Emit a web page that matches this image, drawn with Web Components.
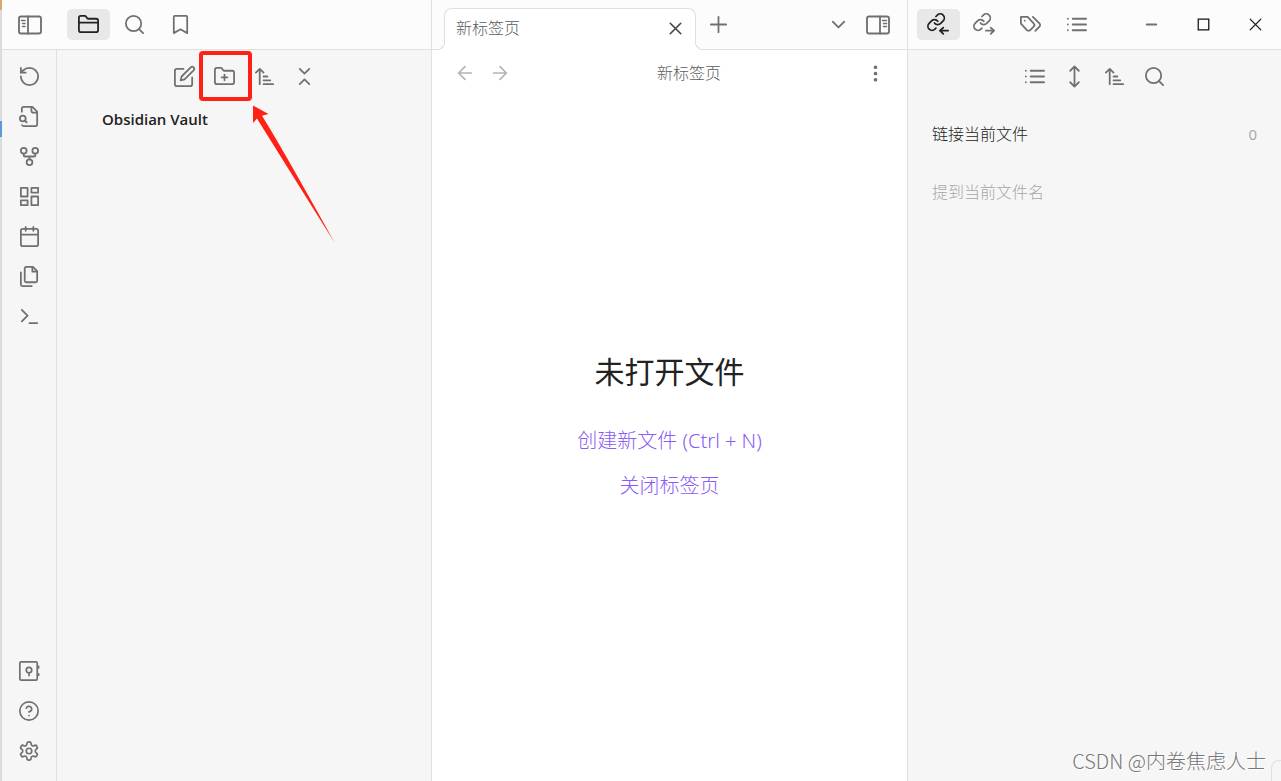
<!DOCTYPE html>
<html lang="zh-CN">
<head>
<meta charset="utf-8">
<meta name="viewport" content="width=device-width, initial-scale=1">
<title>新标签页 - Obsidian Vault</title>
<style>
  html, body { height: 100%; margin: 0; }
  body {
    --bar: #fcfcfc;
    --side: #f6f6f6;
    --line: #e0e0e0;
    --icon: #707070;
    --text: #222;
    --muted: #5c5c5c;
    --faint: #a6a6a6;
    --accent: #8a5cf5;
    --mark: #ff2116;
    font-family: "Open Sans", "Noto Sans CJK SC", sans-serif;
    font-size: 16px;
    line-height: 24px;
    font-weight: 300;
    color: var(--text);
    background: #fff;
    overflow: hidden;
  }
</style>
</head>
<body>
<vault-window></vault-window>

<script>
const ICONS = {
  panelLeft: '<rect x="1" y="3.5" width="22" height="17" rx="2"/><path d="M10 3.5v17"/><path d="M3.5 7.5h3.5M4.5 10.5h2.500M4.500 13.500h2.500" stroke-width="1.500"/>',
  panelRight: '<rect x="1" y="3.5" width="22" height="17" rx="2"/><path d="M14 3.5v17"/><path d="M16.500 7.500h4M17.500 10.500h3M17.500 13.500h3" stroke-width="1.500"/>',
  folder: '<path d="M4 20h16a2 2 0 0 0 2-2V8a2 2 0 0 0-2-2h-7.93a2 2 0 0 1-1.66-.9l-.82-1.200A2 2 0 0 0 7.930 3H4a2 2 0 0 0-2 2v13c0 1.100.9 2 2 2Z"/><path d="M2 10h20"/>',
  folderPlus: '<path d="M4 20h16a2 2 0 0 0 2-2V8a2 2 0 0 0-2-2h-7.93a2 2 0 0 1-1.66-.9l-.82-1.200A2 2 0 0 0 7.930 3H4a2 2 0 0 0-2 2v13c0 1.100.9 2 2 2Z"/><path d="M12 10v6M9 13h6"/>',
  search: '<circle cx="11" cy="11" r="8"/><path d="m21 21-4.300-4.300"/>',
  bookmark: '<path d="m19 21-7-4-7 4V4a1 1 0 0 1 1-1h12a1 1 0 0 1 1 1v17z"/>',
  edit: '<path d="M11 4H4a2 2 0 0 0-2 2v14a2 2 0 0 0 2 2h14a2 2 0 0 0 2-2v-7"/><path d="M18.500 2.500a2.120 2.120 0 0 1 3 3L12 15l-4 1 1-4Z"/>',
  sort: '<path d="m3 8 4-4 4 4M7 4v16M11 12h4M11 16h7M11 20h10"/>',
  collapse: '<path d="m7 20 5-5 5 5M7 4l5 5 5-5"/>',
  rotate: '<path d="M3 12a9 9 0 1 0 9-9 9.750 9.750 0 0 0-6.740 2.740L3 8"/><path d="M3 3v5h5"/>',
  fileSearch: '<path d="M14 2v4a2 2 0 0 0 2 2h4"/><path d="M4.268 21a2 2 0 0 0 1.727 1H18a2 2 0 0 0 2-2V7l-5-5H6a2 2 0 0 0-2 2v3"/><path d="m9 18-1.500-1.500"/><circle cx="5" cy="14" r="3"/>',
  fork: '<circle cx="12" cy="18" r="3"/><circle cx="6" cy="6" r="3"/><circle cx="18" cy="6" r="3"/><path d="M18 9v2c0 .6-.4 1-1 1H7c-.6 0-1-.4-1-1V9M12 12v3"/>',
  dashboard: '<path d="M3 3h7v9H3zM14 3h7v5h-7zM14 12h7v9h-7zM3 16h7v5H3z"/>',
  calendar: '<rect x="3" y="4" width="18" height="18" rx="2"/><path d="M16 2v4M8 2v4M3 10h18"/>',
  files: '<path d="M15.500 2H8.600A1.600 1.600 0 0 0 7 3.600v12.800A1.600 1.600 0 0 0 8.600 18h9.800a1.600 1.600 0 0 0 1.600-1.600V6.500L15.500 2z"/><path d="M3 7.600v12.800A1.600 1.600 0 0 0 4.600 22h9.800M15 2v5h5"/>',
  terminal: '<path d="m4 17 6-6-6-6M12 19h8"/>',
  vault: '<rect x="2" y="2" width="19" height="20" rx="1.500"/><circle cx="12" cy="11" r="3"/><path d="M12 14v3M22.500 7v1.500M22.500 15v1.500"/>',
  help: '<circle cx="12" cy="12" r="10"/><path d="M9.090 9a3 3 0 0 1 5.830 1c0 2-3 3-3 3M12 17h.01"/>',
  gear: '<path d="M12.220 2h-.44a2 2 0 0 0-2 2v.18a2 2 0 0 1-1 1.730l-.43.25a2 2 0 0 1-2 0l-.15-.08a2 2 0 0 0-2.730.73l-.22.38a2 2 0 0 0 .73 2.730l.15.1a2 2 0 0 1 1 1.720v.51a2 2 0 0 1-1 1.740l-.15.09a2 2 0 0 0-.73 2.730l.22.38a2 2 0 0 0 2.730.73l.15-.08a2 2 0 0 1 2 0l.43.25a2 2 0 0 1 1 1.730V20a2 2 0 0 0 2 2h.44a2 2 0 0 0 2-2v-.18a2 2 0 0 1 1-1.730l.43-.25a2 2 0 0 1 2 0l.15.08a2 2 0 0 0 2.730-.73l.22-.39a2 2 0 0 0-.73-2.730l-.15-.08a2 2 0 0 1-1-1.740v-.5a2 2 0 0 1 1-1.740l.15-.09a2 2 0 0 0 .73-2.730l-.22-.38a2 2 0 0 0-2.730-.73l-.15.08a2 2 0 0 1-2 0l-.43-.25a2 2 0 0 1-1-1.730V4a2 2 0 0 0-2-2z"/><circle cx="12" cy="12" r="3"/>',
  close: '<path d="M18 6 6 18M6 6l12 12"/>',
  plus: '<path d="M12 4v16M4 12h16"/>',
  chevron: '<path d="m6 9 6 6 6-6"/>',
  back: '<path d="M19 12H5M12 19l-7-7 7-7"/>',
  forward: '<path d="M5 12h14M12 5l7 7-7 7"/>',
  more: '<g fill="currentColor"><circle cx="12" cy="5.500" r="1"/><circle cx="12" cy="12" r="1"/><circle cx="12" cy="18.500" r="1"/></g>',
  linkIn: '<g transform="translate(-.8 -.8) scale(.86)" stroke-width="2.100"><path d="M10 13a5 5 0 0 0 7.540.54l3-3a5 5 0 0 0-7.070-7.070l-1.720 1.710"/><path d="M14 11a5 5 0 0 0-7.540-.54l-3 3a5 5 0 0 0 7.070 7.070l1.200-1.200"/></g><path d="M22 18.500h-8.500M17 15.200l-3.500 3.300 3.500 3.300"/>',
  linkOut: '<g transform="translate(-.8 -.8) scale(.86)" stroke-width="2.100"><path d="M10 13a5 5 0 0 0 7.540.54l3-3a5 5 0 0 0-7.070-7.070l-1.720 1.710"/><path d="M14 11a5 5 0 0 0-7.540-.54l-3 3a5 5 0 0 0 7.070 7.070l1.200-1.200"/></g><path d="M13.500 18.500H22M18.500 15.200l3.500 3.300-3.500 3.300"/>',
  tags: '<path d="M9 4H2v7l6.290 6.800c.94.94 2.480.94 3.420 0l3.580-3.580c.94-.94.94-2.480 0-3.420L9 4Z"/><path d="M6 8.010V8M14.500 4l6.800 6.800a2.400 2.400 0 0 1 0 3.400L17 18.700"/>',
  list: '<path d="M8 6h14M8 12h14M8 18h14M3 6h.01M3 12h.01M3 18h.01"/>',
  vertical: '<path d="M12 1.500v21M7.500 18l4.500 4.500 4.500-4.500M7.500 6 12 1.500 16.500 6"/>',
  winMin: '<path d="M7 12h10"/>',
  winMax: '<path d="M6.500 6.500h11v11h-11z" stroke="#111" stroke-width="1.300" stroke-linejoin="miter"/>',
  winClose: '<path d="m6.500 6.500 11 11M17.500 6.500l-11 11" stroke="#222" stroke-width="1.200"/>'
};

function element(name, css, html) {
  customElements.define(name, class extends HTMLElement {
    constructor() {
      super();
      const t = document.createElement('template');
      t.innerHTML = `<style>${css}</style>${html}`;
      this.attachShadow({ mode: 'open' }).append(t.content.cloneNode(true));
    }
  });
}

// A real button round one line icon; --w, --h and --size set its box.
customElements.define('icon-button', class extends HTMLElement {
  constructor() {
    super();
    this.attachShadow({ mode: 'open' });
  }
  connectedCallback() {
    this.shadowRoot.innerHTML = `<style>
      :host { display: block; position: relative; flex: none; color: var(--icon); }
      button { display: flex; align-items: center; justify-content: center; width: var(--w, 40px); height: var(--h, 32px);
        margin: 0; padding: 0; border: 0; border-radius: 5px; background: none; color: inherit; }
      :host([active]) { color: #222; }
      :host([active]) button { background: #e8e8e8; }
      :host([disabled]) { color: #b4b4b4; }
      svg { display: block; width: var(--size, 23px); height: var(--size, 23px); }
    </style>
    <button type="button" title="${this.getAttribute('label')}" aria-label="${this.getAttribute('label')}" ${this.hasAttribute('disabled') ? 'disabled' : ''}>
      <svg viewBox="0 0 24 24" fill="none" stroke="currentColor" stroke-width="1.85" stroke-linecap="round" stroke-linejoin="round" aria-hidden="true">${ICONS[this.getAttribute('icon')]}</svg>
    </button><slot></slot>`;
  }
});

element('top-bar', `
  :host { display: flex; align-items: center; box-sizing: border-box; height: 50px; flex: none;
    background: var(--bar); border-bottom: 1px solid var(--line); --w: 43px; --h: 31px; }
`, `<slot></slot>`);

element('tool-row', `
  :host { display: flex; justify-content: center; padding: 10px 0; }
`, `<slot></slot>`);

element('side-ribbon', `
  :host { display: flex; flex-direction: column; align-items: center; justify-content: space-between; box-sizing: border-box;
    flex: none; width: 55px; padding: 6px 0 10px; border-right: 1px solid var(--line); --h: 40px; }
`, `<div>
    <icon-button icon="rotate" label="重新加载"></icon-button>
    <icon-button icon="fileSearch" label="快速切换"></icon-button>
    <icon-button icon="fork" label="关系图谱"></icon-button>
    <icon-button icon="dashboard" label="白板"></icon-button>
    <icon-button icon="calendar" label="日记"></icon-button>
    <icon-button icon="files" label="模板"></icon-button>
    <icon-button icon="terminal" label="命令面板"></icon-button>
  </div>
  <div style="--size: 22px">
    <icon-button icon="vault" label="打开其他仓库"></icon-button>
    <icon-button icon="help" label="帮助"></icon-button>
    <icon-button icon="gear" label="设置"></icon-button>
  </div>`);

// Red frame and arrow that point out the button they are slotted into.
element('callout-mark', `
  :host { position: absolute; left: -5px; top: -9px; pointer-events: none; }
  .frame { box-sizing: border-box; width: 53px; height: 50px; border: 4px solid var(--mark); border-radius: 4px; }
  svg { display: block; margin: 4px 0 0 53px; fill: var(--mark); }
`, `<div class="frame"></div>
  <svg width="84" height="138" viewBox="252 105 84 138" aria-hidden="true"><path d="M253 105.500 268.500 114 262 115.800 Q281 146 334.500 242.500 Q274 146 257 118.500L253 123Z"/></svg>`);

element('file-pane', `
  :host { display: flex; flex-direction: column; box-sizing: border-box; flex: none; width: 430px; background: var(--side);
    border-right: 1px solid var(--line); }
  .toggle { --w: 55px; --size: 24px; }
  nav { display: flex; gap: 3px; padding-left: 10px; }
  .body { display: flex; flex: 1; min-height: 0; }
  .files { flex: 1; }
  h1 { margin: 0; padding: 5px 0 0 45px; font-size: 15px; line-height: 24px; font-weight: 600; }
`, `<top-bar>
    <icon-button class="toggle" icon="panelLeft" label="折叠左侧栏"></icon-button>
    <nav>
      <icon-button icon="folder" label="文件列表" active></icon-button>
      <icon-button icon="search" label="搜索"></icon-button>
      <icon-button icon="bookmark" label="书签"></icon-button>
    </nav>
  </top-bar>
  <div class="body">
    <side-ribbon></side-ribbon>
    <section class="files">
      <tool-row>
        <icon-button icon="edit" label="新建笔记"></icon-button>
        <icon-button icon="folderPlus" label="新建文件夹"><callout-mark></callout-mark></icon-button>
        <icon-button icon="sort" label="排序"></icon-button>
        <icon-button icon="collapse" label="全部折叠"></icon-button>
      </tool-row>
      <h1>Obsidian Vault</h1>
    </section>
  </div>`);

element('page-tab', `
  :host { display: flex; align-items: center; justify-content: space-between; position: relative; align-self: flex-end;
    box-sizing: border-box; flex: none; width: 252px; height: 42px; margin: 0 0 -1px 12px; padding: 0 4px 3px 11px;
    background: #fff; border: 1px solid var(--line); border-bottom: 0; border-radius: 8px 8px 0 0; color: var(--muted); --w: 32px; --size: 21px; }
  :host::before, :host::after { content: ""; position: absolute; bottom: 0; width: 8px; height: 8px; }
  :host::before { left: -8px; background: radial-gradient(circle at 0 0, var(--bar) 7px, var(--line) 7px 8px, #fff 8px); }
  :host::after { right: -8px; background: radial-gradient(circle at 100% 0, var(--bar) 7px, var(--line) 7px 8px, #fff 8px); }
  icon-button { color: #444; }
`, `<slot></slot><icon-button icon="close" label="关闭"></icon-button>`);

element('note-pane', `
  :host { display: flex; flex-direction: column; flex: 1; min-width: 0; background: #fff; }
  .add { --w: 44px; }
  .end { display: flex; margin-left: auto; padding-right: 9px; --w: 40px; }
  .end :last-child { --size: 24px; }
  header { display: flex; align-items: center; height: 46px; padding: 0 16px 0 15px; color: var(--muted); --w: 35px; --size: 22px; }
  header span { flex: 1; padding-left: 2px; text-align: center; }
  header .more { --w: 32px; --size: 23px; }
  main { display: flex; flex: 1; flex-direction: column; align-items: center; justify-content: center; padding-bottom: 18px; }
  h2 { margin: 0 0 26px; font-size: 30px; line-height: 40px; font-weight: 400; }
  a { font-family: "Noto Sans", "Noto Sans CJK SC", sans-serif; font-size: 20px; line-height: 25px; margin: 10px 0; color: var(--accent); text-decoration: none; }
`, `<top-bar>
    <page-tab>新标签页</page-tab>
    <icon-button class="add" icon="plus" label="新标签页"></icon-button>
    <div class="end">
      <icon-button icon="chevron" label="标签页列表"></icon-button>
      <icon-button icon="panelRight" label="折叠右侧栏"></icon-button>
    </div>
  </top-bar>
  <header>
    <icon-button icon="back" label="后退" disabled></icon-button>
    <icon-button icon="forward" label="前进" disabled></icon-button>
    <span>新标签页</span>
    <icon-button class="more" icon="more" label="更多选项"></icon-button>
  </header>
  <main>
    <h2>未打开文件</h2>
    <a href="#new">创建新文件 (Ctrl + N)</a>
    <a href="#close">关闭标签页</a>
  </main>`);

element('link-pane', `
  :host { display: flex; flex-direction: column; box-sizing: border-box; flex: none; width: 374px; background: var(--side);
    border-left: 1px solid var(--line); }
  nav { display: flex; gap: 3px; padding-left: 9px; }
  .window { display: flex; margin-left: auto; --w: 52px; --h: 49px; }
  dl { margin: 0; padding: 20px 24px 0; }
  div.row { display: flex; justify-content: space-between; padding: 0 0 34px; }
  dt, dd { margin: 0; }
  dd, .off { color: var(--faint); }
  dd { font-size: 15px; font-weight: 400; }
`, `<top-bar>
    <nav>
      <icon-button icon="linkIn" label="反向链接" active></icon-button>
      <icon-button icon="linkOut" label="出链"></icon-button>
      <icon-button icon="tags" label="标签"></icon-button>
      <icon-button icon="list" label="大纲"></icon-button>
    </nav>
    <div class="window">
      <icon-button icon="winMin" label="最小化"></icon-button>
      <icon-button icon="winMax" label="最大化"></icon-button>
      <icon-button icon="winClose" label="关闭窗口"></icon-button>
    </div>
  </top-bar>
  <tool-row>
    <icon-button icon="list" label="折叠结果"></icon-button>
    <icon-button icon="vertical" label="显示更多上下文"></icon-button>
    <icon-button icon="sort" label="更改排序"></icon-button>
    <icon-button icon="search" label="搜索"></icon-button>
  </tool-row>
  <dl>
    <div class="row"><dt>链接当前文件</dt><dd>0</dd></div>
    <div class="row"><dt class="off">提到当前文件名</dt></div>
  </dl>`);

element('vault-window', `
  :host { display: flex; position: relative; height: 100vh; overflow: hidden; }
  .edge { flex: none; width: 2px; background: linear-gradient(#d9a968 0 10px, #dcdcdc 10px 121px, #5b9bd5 121px 137px, #dcdcdc 137px); }
  .status { position: absolute; right: 0; bottom: 0; width: 9px; height: 20px; border: 1px solid var(--line); border-width: 1px 0 0 1px; border-top-left-radius: 8px; }
  .credit { position: absolute; right: 15px; bottom: 7px; font-family: "Noto Sans CJK SC", sans-serif;
    font-size: 20px; line-height: 26px; color: #777; white-space: nowrap; text-shadow: 1px 1px 0 #fff; }
`, `<div class="edge"></div>
  <file-pane></file-pane>
  <note-pane></note-pane>
  <link-pane></link-pane>
  <div class="status"></div>
  <div class="credit">CSDN @内卷焦虑人士</div>`);
</script>
</body>
</html>
